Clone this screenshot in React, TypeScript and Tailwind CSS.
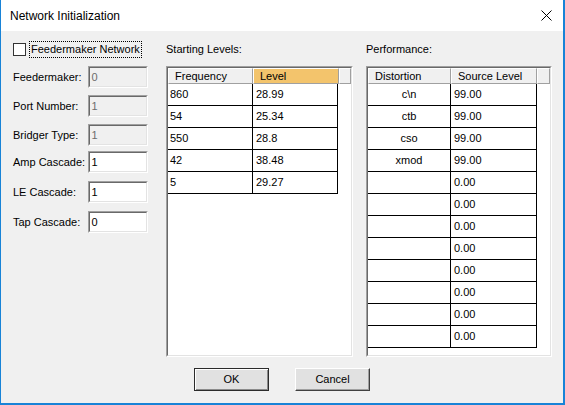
import React from 'react';

const startingLevels = [
  { freq: '860', level: '28.99' },
  { freq: '54', level: '25.34' },
  { freq: '550', level: '28.8' },
  { freq: '42', level: '38.48' },
  { freq: '5', level: '29.27' },
];

const performance = [
  { dist: 'c\\n', level: '99.00' },
  { dist: 'ctb', level: '99.00' },
  { dist: 'cso', level: '99.00' },
  { dist: 'xmod', level: '99.00' },
  { dist: '', level: '0.00' },
  { dist: '', level: '0.00' },
  { dist: '', level: '0.00' },
  { dist: '', level: '0.00' },
  { dist: '', level: '0.00' },
  { dist: '', level: '0.00' },
  { dist: '', level: '0.00' },
  { dist: '', level: '0.00' },
];

const fields = [
  { label: 'Feedermaker:', value: '0', disabled: true, mt: 'mt-[10px]' },
  { label: 'Port Number:', value: '1', disabled: true, mt: 'mt-[7px]' },
  { label: 'Bridger Type:', value: '1', disabled: true, mt: 'mt-[7px]' },
  { label: 'Amp Cascade:', value: '1', disabled: false, mt: 'mt-[5px]' },
  { label: 'LE Cascade:', value: '1', disabled: false, mt: 'mt-[8px]' },
  { label: 'Tap Cascade:', value: '0', disabled: false, mt: 'mt-[8px]' },
];

const Sunken = ({ className, children }: { className: string; children: React.ReactNode }) => (
  <div className={`border border-t-[#a0a0a0] border-l-[#a0a0a0] border-b-white border-r-white ${className}`}>
    <div className="w-full h-full border border-t-[#696969] border-l-[#696969] border-b-[#e3e3e3] border-r-[#e3e3e3]">
      {children}
    </div>
  </div>
);

const HeaderCell = ({ w, label, active }: { w: string; label: string; active?: boolean }) => (
  <div
    className={`${w} h-[16px] flex items-center pl-[6px] border border-t-white border-l-white border-b-[#a0a0a0] border-r-[#a0a0a0] ${
      active ? 'bg-[#f3c46c]' : 'bg-[#f0f0f0]'
    }`}
  >
    {label}
  </div>
);

const App = () => {
  return (
    <div className="w-[565px] h-[405px] bg-[#1883d7] pl-px pr-[2px] pb-[2px] flex flex-col font-['Liberation_Sans',Arial,sans-serif] text-[11px] text-black">
      {/* Title bar */}
      <div className="h-[31px] bg-white flex items-center justify-between pl-[9px] pr-[11px]">
        <span className="text-[12px]">Network Initialization</span>
        <svg width="11" height="11" viewBox="0 0 11 11">
          <path d="M0.5 0.5 L10.5 10.5 M10.5 0.5 L0.5 10.5" stroke="#000" strokeWidth="1" />
        </svg>
      </div>

      {/* Body */}
      <div className="flex-1 bg-[#f0f0f0] pl-[12px] pt-[12px]">
        <div className="flex">
          {/* Left column */}
          <div className="w-[135px] flex flex-col">
            <div className="h-[13px] flex items-center">
              <div className="w-[13px] h-[13px] border border-[#333] bg-white shrink-0" />
              <span className="ml-[3px] h-[17px] flex items-center px-px border border-dotted border-black whitespace-nowrap">
                Feedermaker Network
              </span>
            </div>
            {fields.map((f, i) => (
              <div key={i} className={`flex items-center ${f.mt}`}>
                <span className="w-[76px]">{f.label}</span>
                <Sunken className="w-[60px] h-[22px]">
                  <div
                    className={`w-full h-full flex items-center pl-[1px] ${
                      f.disabled ? 'bg-[#f0f0f0] text-[#6d6d6d]' : 'bg-white'
                    }`}
                  >
                    {f.value}
                  </div>
                </Sunken>
              </div>
            ))}
          </div>

          {/* Starting Levels */}
          <div className="ml-[18px] flex flex-col">
            <div className="leading-[13px] mb-[10px]">Starting Levels:</div>
            <Sunken className="w-[187px] h-[291px]">
              <div className="w-full h-full bg-white">
                <div className="flex">
                  <HeaderCell w="w-[85px]" label="Frequency" />
                  <HeaderCell w="w-[86px]" label="Level" active />
                  <HeaderCell w="flex-1" label="" />
                </div>
                {startingLevels.map((r, i) => (
                  <div key={i} className="flex h-[22px]">
                    <div className="w-[85px] border-r border-b border-black flex items-center pl-[2px]">{r.freq}</div>
                    <div className="w-[85px] border-r border-b border-black flex items-center pl-[3px]">{r.level}</div>
                  </div>
                ))}
              </div>
            </Sunken>
          </div>

          {/* Performance */}
          <div className="ml-[13px] flex flex-col">
            <div className="leading-[13px] mb-[10px]">Performance:</div>
            <Sunken className="w-[186px] h-[291px]">
              <div className="w-full h-full bg-white">
                <div className="flex">
                  <HeaderCell w="w-[83px]" label="Distortion" />
                  <HeaderCell w="w-[86px]" label="Source Level" />
                  <HeaderCell w="flex-1" label="" />
                </div>
                {performance.map((r, i) => (
                  <div key={i} className="flex h-[22px]">
                    <div className="w-[83px] border-r border-b border-black flex items-center justify-center">{r.dist}</div>
                    <div className="w-[86px] border-r border-b border-black flex items-center pl-[3px]">{r.level}</div>
                  </div>
                ))}
              </div>
            </Sunken>
          </div>
        </div>

        {/* Buttons */}
        <div className="flex mt-[11px] ml-[181px] gap-[26px]">
          <button className="w-[75px] h-[23px] border border-[#2b2b2b] bg-[#e1e1e1] shadow-[inset_1px_1px_0_#fff,inset_-1px_-1px_0_#8a8a8a] flex items-center justify-center">
            OK
          </button>
          <button className="w-[75px] h-[23px] border border-t-white border-l-white border-b-[#404040] border-r-[#404040] bg-[#e1e1e1] shadow-[inset_-1px_-1px_0_#a0a0a0] flex items-center justify-center">
            Cancel
          </button>
        </div>
      </div>
    </div>
  );
};

export default App;
